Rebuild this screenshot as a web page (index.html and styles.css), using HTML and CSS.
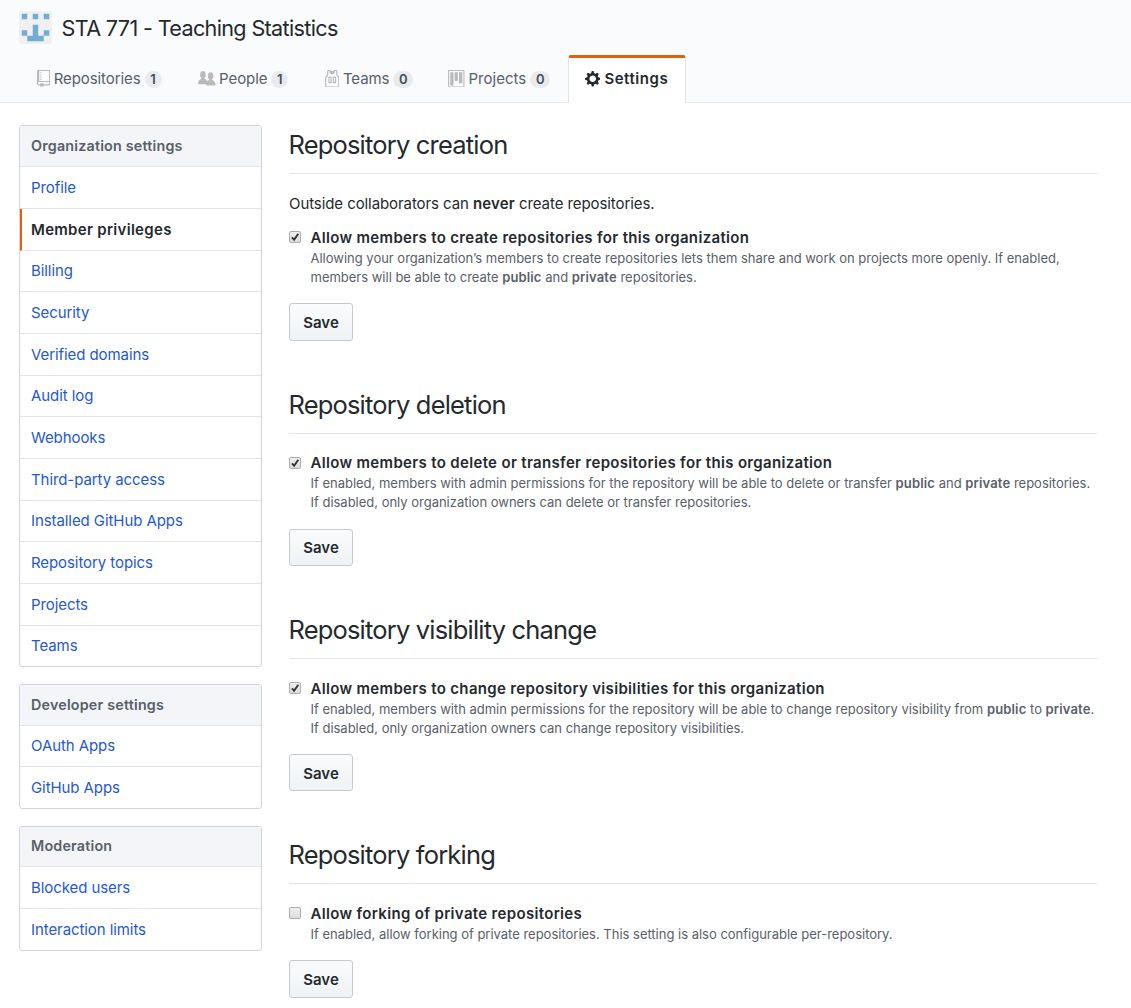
FILE: index.html
```html
<!DOCTYPE html>
<html lang="en">
<head>
<meta charset="utf-8">
<title>Member privileges</title>
<link rel="stylesheet" href="styles.css">
</head>
<body>
<header class="page-head">
  <div class="org">
    <svg class="avatar" viewBox="0 0 33 33"><rect width="33" height="33" rx="3" fill="#f0f0f0"/><path fill="#72aed3" d="M2.750 2.750h5.500v5.500h-5.500zM13.750 2.750h5.500v5.500h-5.500zM24.750 2.750h5.500v5.500h-5.500zM13.750 13.750h5.500v11h5.500v-5.500h5.500v5.500h-5.500v5.500H8.250v-5.500h-5.500v-5.500h5.500v5.500h5.500z"/></svg>
    <h1 class="org-name">STA 771 - Teaching Statistics</h1>
  </div>
  <nav class="tabs">
    <a class="tab tab-repos"><svg class="icon" width="13.200" height="17.600" viewBox="0 0 12 16"><path fill-rule="evenodd" d="M4 9H3V8h1v1zm0-3H3v1h1V6zm0-2H3v1h1V4zm0-2H3v1h1V2zm8-1v12c0 .550-.450 1-1 1H6v2l-1.500-1.500L3 16v-2H1c-.550 0-1-.450-1-1V1c0-.550.450-1 1-1h10c.550 0 1 .450 1 1zm-1 10H1v2h2v-1h3v1h5v-2zm0-10H2v9h9V1z"/></svg><span class="tab-text">Repositories</span><span class="count">1</span></a>
    <a class="tab tab-people"><svg class="icon" width="17.600" height="17.600" viewBox="0 0 16 16"><path d="M16 12.999c0 .439-.450 1-1 1H7.995c-.539 0-.994-.447-.995-.999H1c-.540 0-1-.561-1-1 0-2.634 3-4 3-4s.229-.409 0-1c-.841-.621-1.058-.590-1-3 .058-2.419 1.367-3 2.500-3s2.442.580 2.500 3c.058 2.410-.159 2.379-1 3-.229.590 0 1 0 1s1.549.711 2.420 2.088C9.196 9.369 10 8.999 10 8.999s.229-.409 0-1c-.841-.620-1.058-.590-1-3 .058-2.419 1.367-3 2.500-3s2.437.581 2.495 3c.059 2.410-.158 2.380-1 3-.229.590 0 1 0 1s3.005 1.366 3.005 4"/></svg><span class="tab-text">People</span><span class="count">1</span></a>
    <a class="tab tab-teams"><svg class="icon" width="15.400" height="17.600" viewBox="0 0 14 16"><path fill-rule="evenodd" d="M4.500 6l-.5.500v5l.5.500h2l.5-.5v-5L6.500 6h-2zM6 11H5V7h1v4zm6.270-7.250C12.050 2.370 11.960 1.120 12 0H9.020c0 .270-.130.480-.390.690-.250.200-.630.300-1.130.300-.5 0-.880-.090-1.130-.3-.230-.2-.360-.420-.370-.690H3c.050 1.130-.030 2.380-.25 3.750C2.550 5.130 1.950 5.880 1 6v9c.020.270.110.480.310.690.2.200.420.300.690.310h11c.270-.020.480-.110.690-.310.210-.2.300-.420.310-.690V6c-.950-.130-1.530-.880-1.750-2.250h.020zM13 15H2V7c.890-.5 1.480-1.250 1.720-2.250S4.030 2.500 4 1h1c-.020.780.160 1.470.520 2.060.360.580 1.020.890 2 .940.980-.020 1.640-.330 2-.940.360-.590.500-1.280.480-2.060h1c.020 1.420.130 2.550.330 3.380.200.810.690 2 1.670 2.620v8zM8.500 6l-.5.500v5l.5.500h2l.5-.5v-5l-.5-.5h-2zm1.500 5H9V7h1v4z"/></svg><span class="tab-text">Teams</span><span class="count">0</span></a>
    <a class="tab tab-projects"><svg class="icon" width="16.500" height="17.600" viewBox="0 0 15 16"><path fill-rule="evenodd" d="M10 12h3V2h-3v10zm-4-2h3V2H6v8zm-4 4h3V2H2v12zm-1 1h13V1H1v14zM14 0H1a1 1 0 0 0-1 1v14a1 1 0 0 0 1 1h13a1 1 0 0 0 1-1V1a1 1 0 0 0-1-1z"/></svg><span class="tab-text">Projects</span><span class="count">0</span></a>
    <a class="tab tab-settings selected"><svg class="icon" width="15.400" height="17.600" viewBox="0 0 14 16"><path fill-rule="evenodd" d="M14 8.770v-1.600l-1.940-.640-.450-1.090.880-1.840-1.130-1.130-1.810.910-1.090-.450-.690-1.920h-1.600l-.630 1.940-1.110.450-1.840-.880-1.130 1.130.910 1.810-.450 1.090L0 7.230v1.590l1.940.640.450 1.090-.880 1.840 1.130 1.130 1.810-.910 1.090.450.690 1.920h1.590l.630-1.940 1.110-.450 1.840.880 1.130-1.130-.920-1.810.470-1.090L14 8.750v.020zM7 11c-1.660 0-3-1.340-3-3s1.340-3 3-3 3 1.340 3 3-1.340 3-3 3z"/></svg><span class="tab-text">Settings</span></a>
  </nav>
</header>
<div class="layout">
  <aside class="sidebar">
    <nav class="menu menu-org">
      <h3 class="menu-title">Organization settings</h3>
      <a class="menu-item">Profile</a>
      <a class="menu-item current">Member privileges</a>
      <a class="menu-item">Billing</a>
      <a class="menu-item">Security</a>
      <a class="menu-item">Verified domains</a>
      <a class="menu-item">Audit log</a>
      <a class="menu-item">Webhooks</a>
      <a class="menu-item">Third-party access</a>
      <a class="menu-item">Installed GitHub Apps</a>
      <a class="menu-item">Repository topics</a>
      <a class="menu-item">Projects</a>
      <a class="menu-item">Teams</a>
    </nav>
    <nav class="menu menu-dev">
      <h3 class="menu-title">Developer settings</h3>
      <a class="menu-item">OAuth Apps</a>
      <a class="menu-item">GitHub Apps</a>
    </nav>
    <nav class="menu menu-moderation">
      <h3 class="menu-title">Moderation</h3>
      <a class="menu-item">Blocked users</a>
      <a class="menu-item">Interaction limits</a>
    </nav>
  </aside>
  <main class="content">
    <section class="section section-creation">
      <h2 class="section-title">Repository creation</h2>
      <p class="intro">Outside collaborators can <b>never</b> create repositories.</p>
      <div class="option">
        <span class="checkbox"><svg viewBox="0 0 10 10"><path d="M1.900 5.400l2.200 2.300L8.300 1.700"/></svg></span>
        <div class="option-body">
          <div class="label">Allow members to create repositories for this organization</div>
          <p class="note">Allowing your organization’s members to create repositories lets them share and work on projects more openly. If enabled,<br>members will be able to create <b>public</b> and <b>private</b> repositories.</p>
        </div>
      </div>
      <button class="save">Save</button>
    </section>
    <section class="section">
      <h2 class="section-title">Repository deletion</h2>
      <div class="option">
        <span class="checkbox"><svg viewBox="0 0 10 10"><path d="M1.900 5.400l2.200 2.300L8.300 1.700"/></svg></span>
        <div class="option-body">
          <div class="label">Allow members to delete or transfer repositories for this organization</div>
          <p class="note">If enabled, members with admin permissions for the repository will be able to delete or transfer <b>public</b> and <b>private</b> repositories.<br>If disabled, only organization owners can delete or transfer repositories.</p>
        </div>
      </div>
      <button class="save">Save</button>
    </section>
    <section class="section">
      <h2 class="section-title">Repository visibility change</h2>
      <div class="option">
        <span class="checkbox"><svg viewBox="0 0 10 10"><path d="M1.900 5.400l2.200 2.300L8.300 1.700"/></svg></span>
        <div class="option-body">
          <div class="label">Allow members to change repository visibilities for this organization</div>
          <p class="note">If enabled, members with admin permissions for the repository will be able to change repository visibility from <b>public</b> to <b>private</b>.<br>If disabled, only organization owners can change repository visibilities.</p>
        </div>
      </div>
      <button class="save">Save</button>
    </section>
    <section class="section">
      <h2 class="section-title">Repository forking</h2>
      <div class="option">
        <span class="checkbox"></span>
        <div class="option-body">
          <div class="label">Allow forking of private repositories</div>
          <p class="note">If enabled, allow forking of private repositories. This setting is also configurable per-repository.</p>
        </div>
      </div>
      <button class="save">Save</button>
    </section>
  </main>
</div>
</body>
</html>
```
FILE: styles.css
```css
* { box-sizing: border-box; }
body {
  margin: 0;
  background: #fff;
  color: #24292e;
  font: 15px/23px Inter, "Liberation Sans", sans-serif;
  letter-spacing: -0.08px;
}
h1, h2, h3, p { margin: 0; }
b { font-weight: 600; letter-spacing: 0.15px; }

.page-head {
  height: 103px;
  padding: 11px 19px 0;
  background: #fafbfc;
  border-bottom: 1px solid #e6e9ed;
}
.org { display: flex; align-items: center; height: 33px; gap: 9.5px; }
.avatar { width: 33px; height: 33px; }
.org-name { padding-top: 2px; font-size: 21.6px; line-height: 33px; font-weight: 400; letter-spacing: -0.65px; }

.tabs { display: flex; height: 48px; margin-top: 11px; }
.tab {
  display: flex;
  align-items: center;
  height: 48px;
  padding-bottom: 1px;
  color: #586069;
  white-space: nowrap;
}
.tab-repos { width: 179px; padding-left: 18px; }
.tab-people { width: 126px; }
.tab-teams { width: 124px; }
.tab-projects { width: 120px; letter-spacing: 0.02px; }
.tab .icon { flex: none; fill: #bababa; margin-right: 3.5px; }
.tab-projects .icon { margin-right: 4px; }
.count {
  margin-left: 4px;
  padding: 0 5.7px;
  height: 17px;
  min-width: 17px;
  margin-top: 1px;
  border-radius: 9px;
  background: #e8eaed;
  color: #444d56;
  font-size: 13px;
  line-height: 17px;
  font-weight: 600;
}
.tab-settings {
  width: 118px;
  padding-left: 16px;
  padding-bottom: 4px;
  background: #fff;
  border: 1px solid #e1e4e8;
  border-top: 3px solid #e36209;
  border-bottom: 0;
  border-radius: 3px 3px 0 0;
  color: #24292e;
  font-weight: 600;
  letter-spacing: 0.55px;
}
.tab-settings .icon { fill: #24292e; margin-right: 4px; }

.layout { display: flex; gap: 27px; padding: 22px 34px 0 19px; }
.sidebar { display: flex; flex-direction: column; gap: 17px; flex: none; width: 243px; }
.menu {
  display: flex;
  flex-direction: column;
  height: 125px;
  border: 1px solid #d1d5da;
  border-radius: 3px;
  overflow: hidden;
}
.menu-org { height: 542px; }
.menu-title, .menu-item {
  display: flex;
  align-items: center;
  flex: none;
  height: 41.67px;
  padding-left: 11px;
  border-bottom: 1px solid #e1e4e8;
}
.menu-title {
  height: 41.33px;
  background: #f3f5f8;
  color: #586069;
  font-size: 14.3px;
  line-height: 20px;
  font-weight: 600;
  letter-spacing: 0.2px;
}
.menu-dev .menu-title, .menu-dev .menu-item { height: 41px; }
.menu-dev .menu-title + .menu-item { padding-bottom: 2px; }
.menu-moderation .menu-title { height: 40.33px; padding-bottom: 1px; }
.menu-item { color: #1f58cf; }
.menu .menu-item:last-child { flex: 1; border-bottom: 0; }
.menu-item.current {
  padding-left: 9px;
  border-left: 2px solid #e36209;
  color: #24292e;
  font-weight: 600;
  letter-spacing: 0.3px;
}

.content { flex: 1; }
.section { height: 225.2px; white-space: nowrap; }
.section-creation { height: 260px; }
.section:last-child { height: auto; }
.section-title {
  height: 49px;
  padding-top: 1px;
  margin-bottom: 17.4px;
  border-bottom: 1px solid #e1e4e8;
  font-size: 25.5px;
  line-height: 38px;
  font-weight: 400;
  letter-spacing: -0.81px;
  text-indent: -0.6px;
}
.intro { margin: 18px 0 11px; }
.option { display: flex; gap: 9.5px; }
.checkbox {
  flex: none;
  display: block;
  width: 12px;
  height: 12px;
  margin-top: 5.4px;
  border: 1px solid #adadad;
  border-radius: 2px;
  background: linear-gradient(#f0f0f0, #dcdcdc);
}
.checkbox svg { display: block; width: 10px; height: 10px; fill: none; stroke: #333; stroke-width: 1.9; }
.label { font-weight: 600; letter-spacing: 0.33px; }
.note { color: #586069; font-size: 13px; line-height: 19px; letter-spacing: -0.01px; }
.save {
  display: block;
  width: 64px;
  height: 37.4px;
  margin-top: 16.4px;
  padding: 0.8px 0 0;
  border: 1px solid #c6cace;
  border-radius: 3px;
  background: linear-gradient(#fafbfc, #eff3f6);
  color: #24292e;
  font: inherit;
  font-weight: 600;
}
```
